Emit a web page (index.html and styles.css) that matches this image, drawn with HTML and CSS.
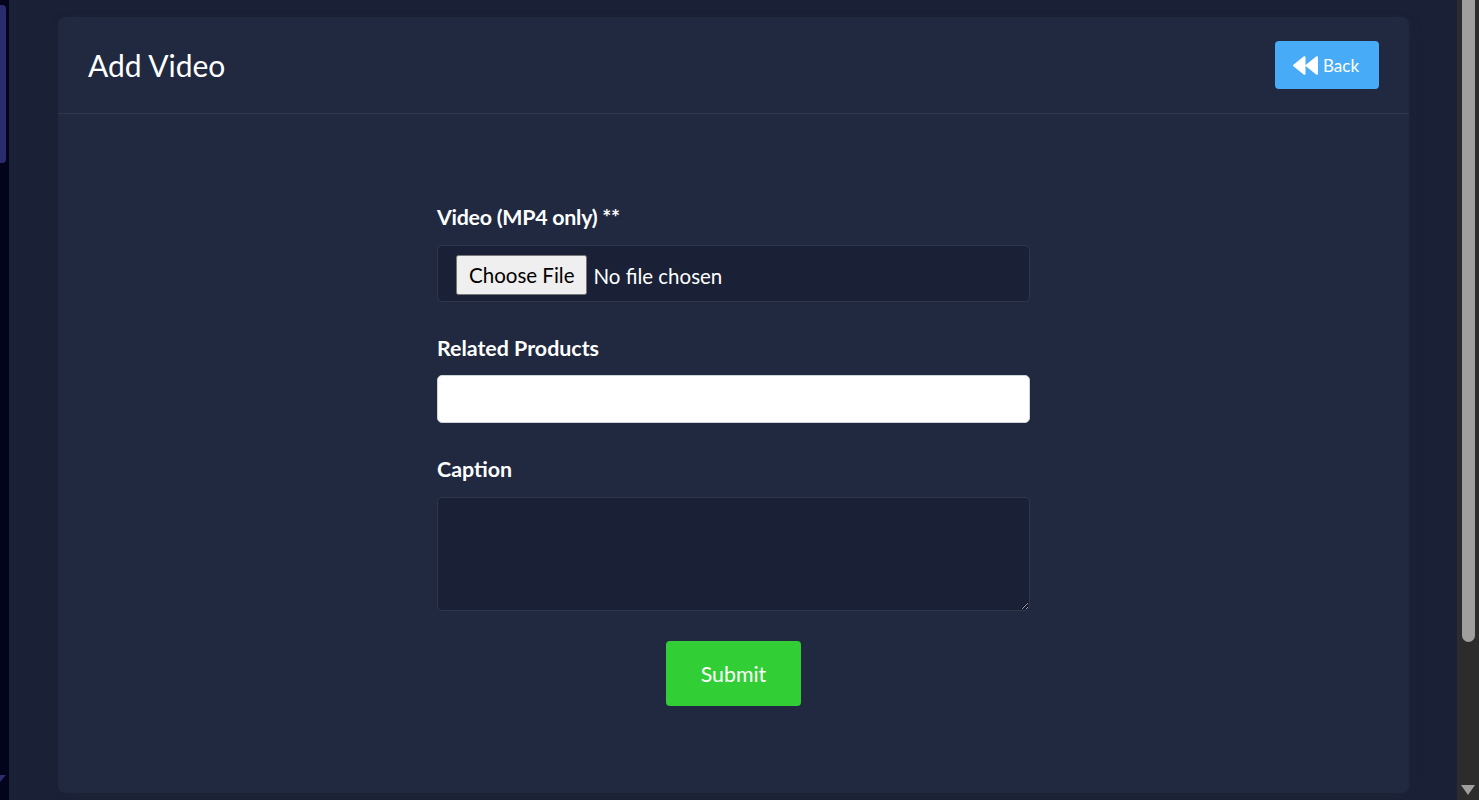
FILE: index.html
```html
<!DOCTYPE html>
<html lang="en">
<head>
  <meta charset="UTF-8" />
  <meta name="viewport" content="width=device-width, initial-scale=1.0"/>
  <title>Add Video</title>
  <link rel="stylesheet" href="styles.css">
</head>
<body>

<div class="app">
  <div class="side-scroll">
    <div class="side-thumb"></div>
    <div class="side-arrow"></div>
  </div>

  <main class="content">
    <div class="card">
      <div class="card-header">
        <h2>Add Video</h2>
        <a class="btn-back" href="#">
          <svg class="icon-back" viewBox="0 0 24 18" preserveAspectRatio="none" aria-hidden="true">
            <path d="M0.4 9.7 L10.2 17.6 C11 18.2 12 17.7 12 16.7 V1.3 C12 0.3 11 -0.2 10.2 0.4 L0.4 8.3 C-0.1 8.7 -0.1 9.3 0.4 9.7 Z M12.4 9.7 L22.2 17.6 C23 18.2 24 17.7 24 16.7 V1.3 C24 0.3 23 -0.2 22.2 0.4 L12.4 8.3 C11.9 8.7 11.9 9.3 12.4 9.7 Z"/>
          </svg>
          Back
        </a>
      </div>

      <form class="card-body">
        <div class="form-group">
          <label class="label-tight" for="video">Video (MP4 only) **</label>
          <input class="field field-file" type="file" id="video" />
        </div>
        <div class="form-group">
          <label for="products">Related Products</label>
          <input class="field field-light" type="text" id="products" />
        </div>
        <div class="form-group">
          <label for="caption">Caption</label>
          <textarea class="field field-area" id="caption"></textarea>
        </div>
        <div class="form-actions">
          <button class="btn-submit" type="button">Submit</button>
        </div>
      </form>
    </div>
  </main>

  <div class="page-scroll">
    <div class="page-thumb"></div>
    <div class="page-arrow"></div>
  </div>
</div>

</body>
</html>
```

FILE: styles.css
```css
html, body {
  height: 100%;
}

body {
  margin: 0;
  overflow: hidden;
  font-family: Lato, "Open Sans", sans-serif;
  color: #fff;
  background: #1a2035;
}

.app {
  display: flex;
  height: 800px;
}

/* sidebar's own scrollbar, only its edge is visible */
.side-scroll {
  width: 9px;
  flex: none;
  background: #03031c;
  display: flex;
  flex-direction: column;
  justify-content: space-between;
  padding: 5px 0 18px;
  box-sizing: border-box;
}

.side-thumb {
  width: 6px;
  height: 158px;
  background: #2a2c6e;
  border-radius: 0 4px 4px 0;
}

.side-arrow {
  width: 0;
  height: 0;
  border-top: 7px solid #2a2c6e;
  border-right: 6px solid transparent;
}

.content {
  flex: 1;
  padding: 17px 48px 7px 49px;
  box-sizing: border-box;
}

.card {
  height: 776px;
  background: #202940;
  border-radius: 7px;
  box-shadow: 2px 6px 15px 0 rgba(69, 65, 78, 0.1);
}

.card-header {
  display: flex;
  align-items: center;
  justify-content: space-between;
  height: 96px;
  padding: 0 30px;
  border-bottom: 1px solid #2f374b;
}

.card-header h2 {
  margin: 0;
  font-size: 30px;
  font-weight: 400;
}

.btn-back {
  display: flex;
  align-items: center;
  gap: 5px;
  width: 104px;
  height: 48px;
  padding-left: 18px;
  box-sizing: border-box;
  background: #48abf7;
  border-radius: 4px;
  color: #fff;
  font-size: 17px;
  text-decoration: none;
}

.icon-back {
  width: 25px;
  height: 19px;
  fill: #fff;
}

.card-body {
  width: 593px;
  margin: 0 auto;
  padding-top: 90.2px;
}

.form-group {
  margin-bottom: 33px;
}

.form-group label {
  display: block;
  margin-bottom: 14.4px;
  font-size: 21.4px;
  font-weight: 700;
  line-height: 26px;
}

.form-group .label-tight {
  letter-spacing: -0.27px;
}

.field {
  display: block;
  width: 100%;
  box-sizing: border-box;
  font-family: inherit;
  border-radius: 5px;
  border: 1px solid #2f374b;
  background: #1a2035;
  color: #fff;
}

.field-file {
  height: 57px;
  padding: 9px 18px;
  font-size: 20.5px;
}

.field-file::file-selector-button {
  height: 40px;
  margin-right: 6px;
  padding: 0 11px;
  vertical-align: 1px;
  font-family: inherit;
  font-size: inherit;
}

.field-light {
  height: 48.2px;
  background: #fff;
  border-color: #ced4da;
}

.field-area {
  height: 114px;
  resize: both;
}

.form-actions {
  display: flex;
  justify-content: center;
  margin-top: -3px;
}

.btn-submit {
  width: 135px;
  height: 65px;
  padding: 2px 0 0;
  border: none;
  border-radius: 4px;
  background: #31ce36;
  color: #fff;
  font-family: inherit;
  font-size: 21.33px;
}

/* page scrollbar */
.page-scroll {
  width: 22px;
  flex: none;
  background: #2c2c2c;
  display: flex;
  flex-direction: column;
  align-items: center;
  justify-content: space-between;
  padding-bottom: 5px;
  box-sizing: border-box;
}

.page-thumb {
  width: 13px;
  height: 642px;
  background: #9f9f9f;
  border-radius: 0 0 7px 7px;
}

.page-arrow {
  width: 0;
  height: 0;
  border-top: 10px solid #9f9f9f;
  border-left: 7px solid transparent;
  border-right: 7px solid transparent;
}
```
